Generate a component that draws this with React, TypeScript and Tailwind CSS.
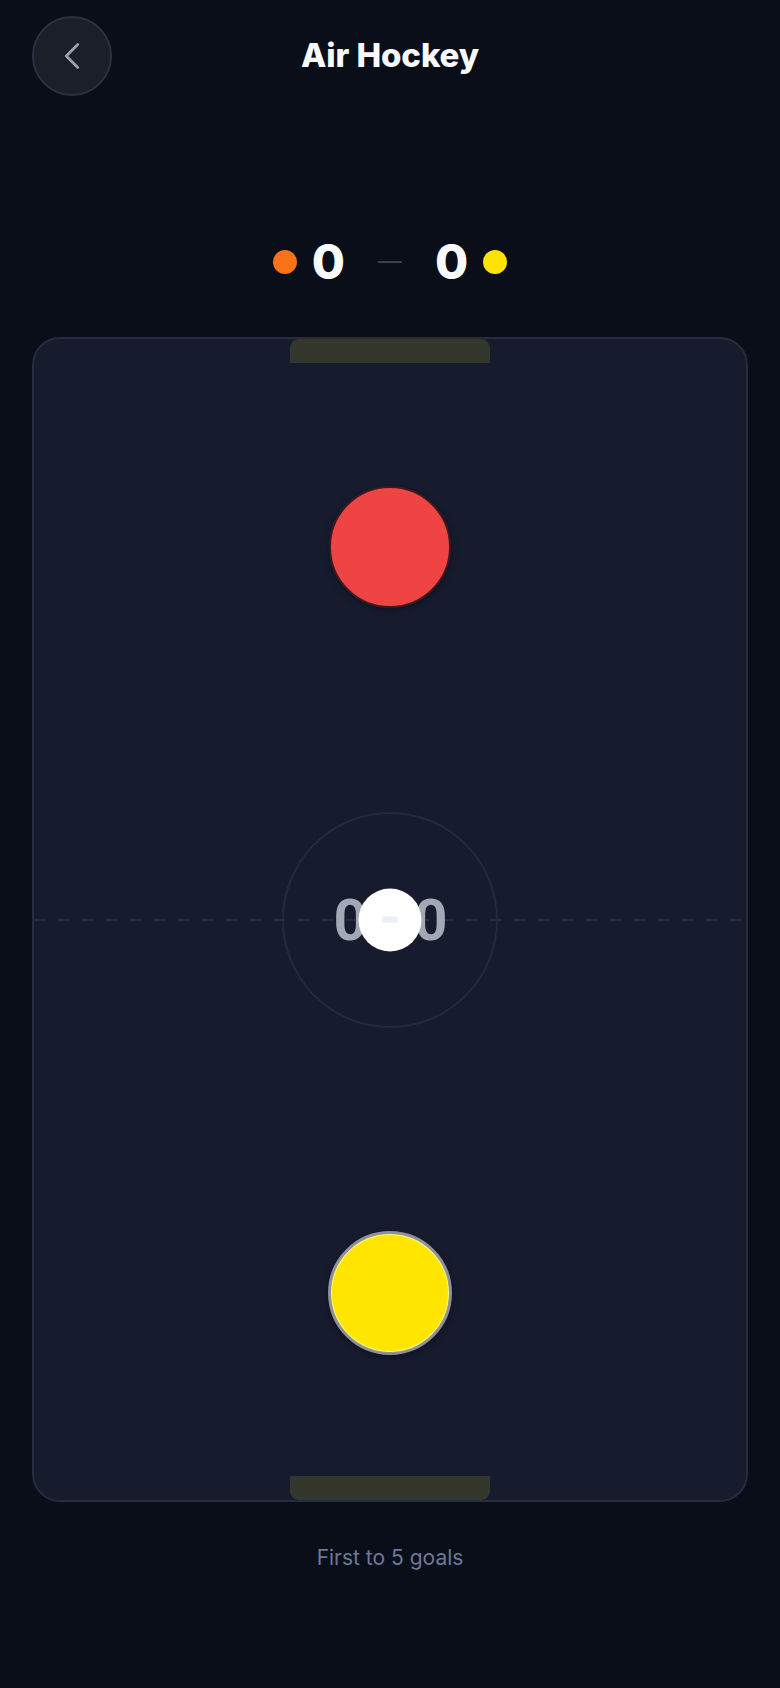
import { ChevronLeft } from "lucide-react";

const font = { fontFamily: "Inter, 'Noto Sans', sans-serif" };

const ScoreBoard = ({ left, right }: { left: number; right: number }) => {
  return (
    <div className="mt-[142px] h-12 flex items-center justify-center gap-[33px]">
      <div className="flex items-center gap-[15px]">
        <span className="size-6 rounded-full bg-[#f97316]" />
        <span className="text-[48px] leading-none font-extrabold text-[#f8fafc]">
          {left}
        </span>
      </div>
      <span className="w-6 h-[2px] bg-[#374151]" />
      <div className="flex items-center gap-[15px]">
        <span className="text-[48px] leading-none font-extrabold text-[#f8fafc]">
          {right}
        </span>
        <span className="size-6 rounded-full bg-[#fde400]" />
      </div>
    </div>
  );
};

const Board = () => {
  return (
    <div className="relative mt-[51px] h-[1165px] rounded-[28px] border-2 border-[#272d3e] bg-[#161b2e] overflow-hidden">
      {/* goals */}
      <div className="absolute top-0 left-1/2 -translate-x-1/2 w-[200px] h-6 rounded-t-[9px] bg-[#34372b]" />
      <div className="absolute bottom-0 left-1/2 -translate-x-1/2 w-[200px] h-6 rounded-b-[9px] bg-[#34372b]" />

      {/* center line */}
      <div className="absolute left-0 right-0 top-1/2 -translate-y-1/2 h-[2px] bg-[repeating-linear-gradient(90deg,#262d40_0_11px,transparent_11px_24px)]" />

      {/* center circle */}
      <div className="absolute left-1/2 top-1/2 -translate-x-1/2 -translate-y-1/2 size-[216px] rounded-full border-2 border-[#232a3b]" />

      {/* live score in the middle */}
      <div
        className="absolute left-1/2 top-1/2 -translate-x-1/2 -translate-y-1/2 text-[58px] leading-none font-bold text-[#a3a9b4] whitespace-pre tracking-[-1px]"
        style={{ fontFamily: "Roboto, 'Liberation Sans', sans-serif" }}
      >
        0 - 0
      </div>

      {/* red mallet */}
      <div className="absolute left-1/2 -translate-x-1/2 top-[147px] size-[122px] rounded-full bg-[#ef4444] border-2 border-[#3d1a20] shadow-[0_2px_6px_rgba(0,0,0,0.35)]" />

      {/* puck */}
      <div className="absolute left-1/2 top-1/2 -translate-x-1/2 -translate-y-1/2 size-[63px] rounded-full bg-white flex items-center justify-center">
        <span className="w-[15px] h-[6px] bg-[#eceef5]" />
      </div>

      {/* yellow mallet */}
      <div className="absolute left-1/2 -translate-x-1/2 top-[892px] size-[124px] rounded-full bg-[#ffe500] border-[3px] border-[#8d919a] shadow-[inset_0_0_0_1px_#fff59d,0_2px_6px_rgba(0,0,0,0.35)]" />
    </div>
  );
};

const App = () => {
  return (
    <div className="min-h-screen bg-[#0a0e19] px-8" style={font}>
      <header className="pt-4 grid grid-cols-[80px_1fr_80px] items-center">
        <button className="size-20 rounded-full bg-[#1b1f2a] border-2 border-[#2b3040] flex items-center justify-center text-[#9ca3af]">
          <ChevronLeft size={46} strokeWidth={1.4} />
        </button>
        <h1 className="text-center text-[33px] font-extrabold text-[#f8fafc] tracking-[-0.1px]">
          Air Hockey
        </h1>
        <div />
      </header>

      <ScoreBoard left={0} right={0} />

      <Board />

      <p className="mt-[42px] text-center text-[21px] leading-7 text-[#6c7999]">
        First to 5 goals
      </p>
    </div>
  );
};

export default App;
